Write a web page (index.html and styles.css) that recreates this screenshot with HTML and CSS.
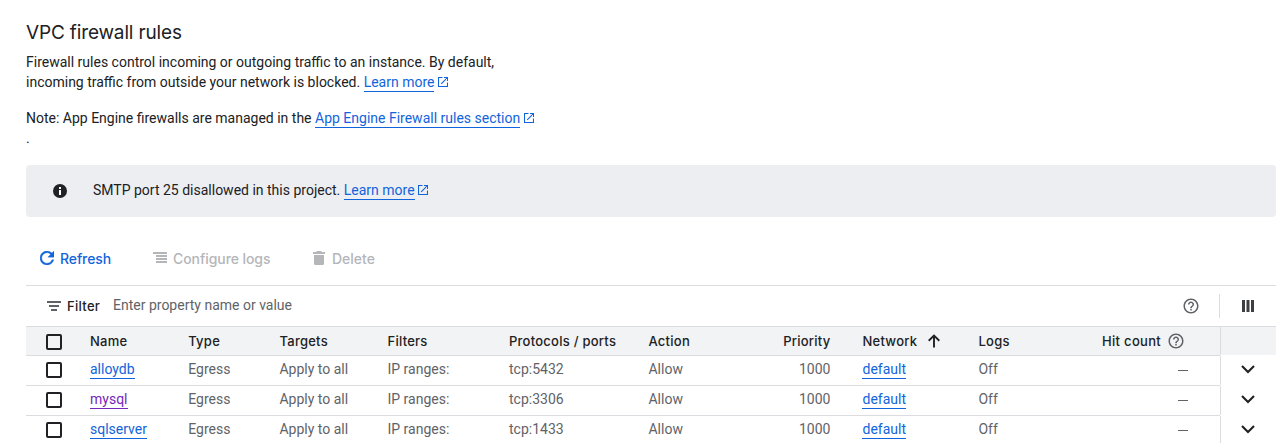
FILE: index.html
```html
<!DOCTYPE html>
<html lang="en">
<head>
<meta charset="utf-8">
<title>VPC firewall rules</title>
<link rel="stylesheet" href="styles.css">
</head>
<body>
<svg width="0" height="0" class="defs">
  <symbol id="external" viewBox="0 0 10 10"><path d="M4.5 .5H.5v9h9v-4M6 .5h3.5V4M9.2.8 3.2 6.8" fill="none" stroke="currentColor" stroke-width="1.1"/></symbol>
  <symbol id="help" viewBox="0 0 24 24"><path fill="currentColor" d="M11 18h2v-2h-2v2zm1-16C6.480 2 2 6.480 2 12s4.480 10 10 10 10-4.480 10-10S17.520 2 12 2zm0 18c-4.410 0-8-3.590-8-8s3.590-8 8-8 8 3.590 8 8-3.590 8-8 8zm0-14c-2.210 0-4 1.790-4 4h2c0-1.100.9-2 2-2s2 .9 2 2c0 2-3 1.750-3 5h2c0-2.250 3-2.500 3-5 0-2.210-1.790-4-4-4z"/></symbol>
  <symbol id="chevron" viewBox="0 0 14 9"><path d="m1 1 6 6 6-6" fill="none" stroke="currentColor" stroke-width="2.100"/></symbol>
</svg>
<main class="page">
  <h1 class="title">VPC firewall rules</h1>
  <p class="intro">Firewall rules control incoming or outgoing traffic to an instance. By default,<br>incoming traffic from outside your network is blocked. <a class="link">Learn more</a><svg class="ext"><use href="#external"/></svg></p>
  <p class="intro note">Note: App Engine firewalls are managed in the <a class="link">App Engine Firewall rules section</a><svg class="ext"><use href="#external"/></svg><br>.</p>

  <section class="banner">
    <svg class="info" viewBox="0 0 14 14"><circle cx="7" cy="7" r="7" fill="#202124"/><path d="M6 3h2v2H6zM6 6h2v5H6z" fill="#fff"/></svg>
    <span>SMTP port 25 disallowed in this project. <a class="link">Learn more</a><svg class="ext near"><use href="#external"/></svg></span>
  </section>

  <div class="toolbar">
    <span class="action refresh"><svg width="14" height="14" viewBox="4 4 16 16"><path fill="currentColor" stroke="currentColor" stroke-width=".4" d="M17.650 6.350A7.958 7.958 0 0 0 12 4c-4.420 0-7.990 3.580-7.990 8s3.570 8 7.990 8c3.730 0 6.840-2.550 7.730-6h-2.080A5.990 5.990 0 0 1 12 18c-3.310 0-6-2.690-6-6s2.690-6 6-6c1.660 0 3.140.69 4.220 1.780L13 11h7V4l-2.350 2.350z"/></svg>Refresh</span>
    <span class="action configure"><svg width="14" height="12" viewBox="0 0 14 12"><path fill="currentColor" d="M0 0h14v2H0zM3 3h11v2H3zM3 6h11v2H3zM3 9h11v2H3z"/></svg>Configure logs</span>
    <span class="action delete"><svg width="12" height="14" viewBox="0 0 12 14"><path fill="currentColor" d="M4 0h4l1 1h3v2H0V1h3zM1 4h10v8.500q0 1.500-1.500 1.500h-7Q1 14 1 12.500z"/></svg>Delete</span>
  </div>

  <div class="filterbar">
    <svg class="filter-icon" width="14" height="10" viewBox="0 0 14 10"><path fill="#5f6368" d="M0 0h14v2H0zM2 4h10v2H2zM4 8h6v2H4z"/></svg>
    <b class="filter-label">Filter</b>
    <span class="placeholder">Enter property name or value</span>
    <svg class="help"><use href="#help"/></svg>
    <span class="columns"><svg width="12" height="12" viewBox="0 0 12 12"><path fill="#3c4043" d="M0 0h3v12H0zM4.500 0h3v12h-3zM9 0h3v12H9z"/></svg></span>
  </div>

  <div class="table">
    <div class="row head">
      <div class="cells"><i class="check"></i><span>Name</span><span>Type</span><span>Targets</span><span>Filters</span><span>Protocols / ports</span><span>Action</span><span class="right">Priority</span><span class="network">Network<svg class="sort" width="12" height="14" viewBox="0 0 12 14"><path d="M6 13.500V2M.7 6.700 6 1.500l5.300 5.200" fill="none" stroke="#202124" stroke-width="1.900"/></svg></span><span>Logs</span><span class="hits">Hit count<svg class="help"><use href="#help"/></svg></span></div>
      <div class="expand"></div>
    </div>
    <div class="row">
      <div class="cells"><i class="check"></i><span><a class="link">alloydb</a></span><span>Egress</span><span>Apply to all</span><span>IP ranges:</span><span>tcp:5432</span><span>Allow</span><span class="right">1000</span><span class="network"><a class="link">default</a></span><span>Off</span><span class="hits"><i class="dash"></i></span></div>
      <div class="expand"><svg><use href="#chevron"/></svg></div>
    </div>
    <div class="row">
      <div class="cells"><i class="check"></i><span><a class="link visited">mysql</a></span><span>Egress</span><span>Apply to all</span><span>IP ranges:</span><span>tcp:3306</span><span>Allow</span><span class="right">1000</span><span class="network"><a class="link">default</a></span><span>Off</span><span class="hits"><i class="dash"></i></span></div>
      <div class="expand"><svg><use href="#chevron"/></svg></div>
    </div>
    <div class="row">
      <div class="cells"><i class="check"></i><span><a class="link">sqlserver</a></span><span>Egress</span><span>Apply to all</span><span>IP ranges:</span><span>tcp:1433</span><span>Allow</span><span class="right">1000</span><span class="network"><a class="link">default</a></span><span>Off</span><span class="hits"><i class="dash"></i></span></div>
      <div class="expand"><svg><use href="#chevron"/></svg></div>
    </div>
  </div>
</main>
</body>
</html>
```
FILE: styles.css
```css
* { box-sizing: border-box; }
html, body { margin: 0; height: 443px; overflow: hidden; background: #fff; }
body { font: 14px/20px Roboto, Arial, sans-serif; color: #202124; }
svg { flex: none; }
.defs { display: block; height: 0; }
.page { width: 1276px; padding: 21px 0 0 26px; }
.title { margin: 0; font: 400 19px/24px Inter, sans-serif; letter-spacing: -0.15px; }
.intro { margin: 7px 0 0; }
.note { margin-top: 16px; }
.link { color: #1264dc; border-bottom: 1px solid #1264dc; padding-bottom: 1px; }
.visited { color: #7627bb; border-color: #7627bb; }
.ext { width: 10px; height: 10px; margin-left: 4px; color: #1264dc; }
.near { margin-left: 3px; }

.banner { display: flex; align-items: center; height: 52px; margin-top: 17px; padding: 0 27px; border-radius: 4px; background: #edeef2; }
.banner > span { margin-top: -2px; }
.info { width: 14px; height: 14px; margin-right: 26px; }

.toolbar { display: flex; height: 68px; padding: 15px 0 0 14px; }
.action { display: flex; align-items: center; height: 54px; font: 500 14px/20px Inter, sans-serif; color: #b4b6b9; }
.action svg { margin-top: -2px; }
.refresh { width: 113px; gap: 6px; color: #1264dc; letter-spacing: -0.1px; }
.configure { width: 160px; gap: 6px; letter-spacing: -0.07px; }
.delete { gap: 7px; }

.filterbar { display: flex; align-items: center; height: 41px; padding-left: 21px; border-top: 1px solid #dadce0; }
.filter-label { width: 46px; margin-left: 6px; font: 500 13px/20px Inter, sans-serif; letter-spacing: 0.3px; }
.placeholder { flex: 1; margin-top: -2px; color: #5f6368; }
.help { width: 18px; height: 18px; color: #5f6368; }
.columns { display: flex; align-items: center; width: 57px; height: 24px; margin-left: 19px; padding-left: 22px; border-left: 1px solid #dadce0; }

.table { border-top: 1px solid #dadce0; }
.row { display: flex; height: 30px; color: #5f6368; }
.cells { display: grid; grid-template-columns: 64px 98.2px 91.3px 108px 121.5px 139.5px 72px 110px 148px 80px 1fr; align-items: center; width: 1194px; padding-right: 32px; border-bottom: 1px solid #dadce0; }
.check { width: 16px; height: 16px; margin: -1px 0 0 20px; border: 2px solid #202124; border-radius: 2px; }
.cells > span { margin-top: -3px; white-space: nowrap; }
.right { text-align: right; }
.network { padding-left: 32px; }
.sort { margin-left: 11px; }
.hits { display: flex; justify-content: flex-end; align-items: center; }
.dash { width: 10px; height: 1px; margin-top: 2px; background: #5f6368; }
.expand { display: flex; align-items: center; width: 56px; height: 29px; padding-left: 20px; border-left: 1px solid #dadce0; }
.expand svg { width: 14px; height: 9px; margin-top: -3px; color: #202124; }
.head { height: 29px; color: #202124; font: 500 13px/20px Inter, sans-serif; letter-spacing: 0.25px; }
.head .cells, .head .expand { background: #f1f3f4; }
.head .expand { height: 28px; }
.head .check { margin-top: 1px; }
.head .cells > span { margin-top: 0; }
.head .network { display: flex; align-items: center; }
.head .hits { gap: 6px; margin-right: 3px; letter-spacing: 0.3px; }
```
